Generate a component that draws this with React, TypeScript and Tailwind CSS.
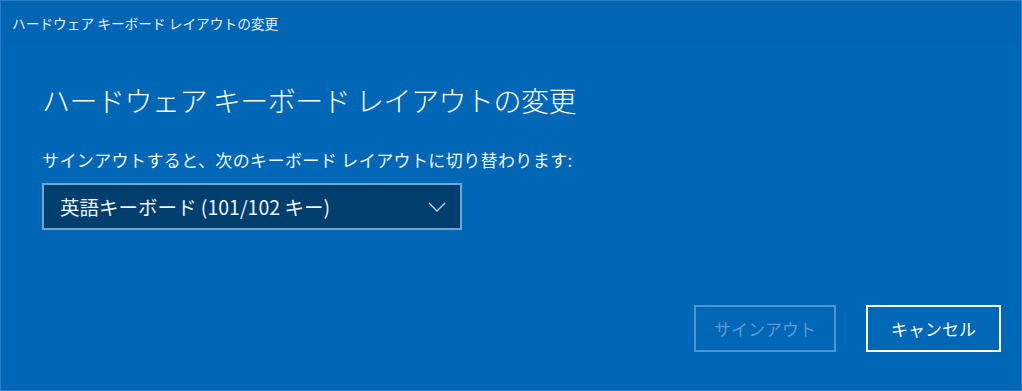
const FONT = { fontFamily: '"Noto Sans CJK JP", "Noto Sans", sans-serif' };

function Chevron() {
  return (
    <svg width="18" height="10" viewBox="0 0 18 10" fill="none" className="shrink-0">
      <path d="M1 1l8 8 8-8" stroke="#c9d8e6" strokeWidth="1.3" />
    </svg>
  );
}

export default function App() {
  return (
    <div
      style={FONT}
      className="w-[1022px] h-[391px] bg-[#0066b6] border border-[#2b7cc2] flex flex-col text-white overflow-hidden"
    >
      {/* Title bar */}
      <div className="h-[44px] shrink-0 flex items-center pl-[11px] bg-[#0065b4] text-[13.7px] text-[#e8f0f8]">
        ハードウェア キーボード レイアウトの変更
      </div>

      {/* Content */}
      <div className="flex-1 flex flex-col pl-[41px] pr-[20px]">
        <h1 className="mt-[35px] text-[28px] leading-[40px] font-light tracking-[-0.5px]">
          ハードウェア キーボード レイアウトの変更
        </h1>
        <p className="mt-[28px] text-[17px] leading-[24px] tracking-[0.4px] text-[#f2f6fa]">
          サインアウトすると、次のキーボード レイアウトに切り替わります:
        </p>
        <div className="mt-[11px] w-[420px] h-[47px] border-2 border-[#6ea6d6] bg-[#003e6d] flex items-center justify-between pl-[16px] pr-[14px]">
          <span className="text-[19.5px] text-[#eef3f8]">英語キーボード (101/102 キー)</span>
          <Chevron />
        </div>

        <div className="flex-1" />

        <div className="flex justify-end gap-[30px] mb-[38px]">
          <button className="w-[142px] h-[47px] border-2 border-[#4d94d0] text-[17px] text-[#5a9bd2]">
            サインアウト
          </button>
          <button className="w-[135px] h-[47px] border-2 border-white text-[17px] text-white">
            キャンセル
          </button>
        </div>
      </div>
    </div>
  );
}
